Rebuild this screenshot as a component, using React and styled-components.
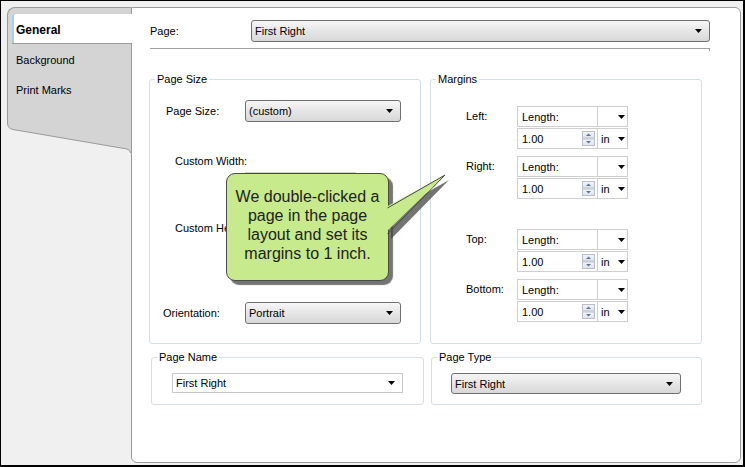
import React from 'react';
import styled, { createGlobalStyle } from 'styled-components';

const Global = createGlobalStyle`
  html, body { margin: 0; padding: 0; background: #fff; }
  body { font-family: "Liberation Sans", Arial, sans-serif; font-size: 11px; color: #000; }
  * { box-sizing: border-box; }
`;

const Window = styled.div`
  width: 745px;
  height: 467px;
  border-style: solid;
  border-color: #000;
  border-width: 1px 2px 2px 1px;
  background: #f0f0f0;
  padding: 6px 2px 2px 6px;
  display: flex;
  align-items: stretch;
`;

const Sidebar = styled.div`
  width: 124px;
  flex: none;
  display: flex;
  flex-direction: column;
`;

const TabsPanel = styled.div`
  height: 113px;
  background: #d4d4d4;
  border-top: 1px solid #9a9a9a;
  border-left: 1px solid #9a9a9a;
  border-top-left-radius: 8px;
  padding: 6px 0 0 4px;
  display: flex;
  flex-direction: column;
`;

const Tab = styled.div`
  height: 30px;
  display: flex;
  align-items: center;
  padding: 2px 0 0 4px;
  font-size: ${p => (p.$active ? '12px' : '11px')};
  font-weight: ${p => (p.$active ? 'bold' : 'normal')};
  background: ${p => (p.$active ? '#fff' : 'transparent')};
  border-bottom: 1px solid ${p => (p.$active ? '#9a9a9a' : 'transparent')};
  box-shadow: ${p => (p.$active ? 'inset 2px 0 0 #a9cdee' : 'none')};
  border-top-left-radius: ${p => (p.$active ? '2px' : '0')};
  margin-right: ${p => (p.$active ? '-1px' : '0')};
  position: relative;
  z-index: ${p => (p.$active ? 1 : 0)};
`;

const SlantEdge = styled.svg`
  display: block;
  width: 124px;
  height: 33px;
`;

const Panel = styled.div`
  flex: 1;
  position: relative;
  background: #fff;
  border: 1px solid #9a9a9a;
  border-radius: 0 6px 6px 6px;
  padding: 12px 0 0 17px;
`;

const TopRow = styled.div`
  display: flex;
  align-items: center;
  margin-left: 1px;
`;

const Label = styled.div`
  width: ${p => (p.$w ? `${p.$w}px` : 'auto')};
  flex: none;
  white-space: nowrap;
  line-height: ${p => (p.$lh ? `${p.$lh}px` : 'normal')};
`;

const Select = styled.div`
  width: ${p => p.$w}px;
  height: ${p => p.$h || 22}px;
  flex: none;
  display: flex;
  align-items: center;
  justify-content: space-between;
  padding: 0 7px 0 3px;
  border: 1px solid ${p => (p.$plain ? '#c9c9c9' : '#707070')};
  border-radius: ${p => (p.$plain ? '0' : '3px')};
  background: ${p => (p.$plain ? '#fff' : 'linear-gradient(#f6f6f6, #e6e6e6 50%, #d8d8d8)')};
  white-space: nowrap;
`;

const Separator = styled.div`
  width: 560px;
  height: 3px;
  margin: 6px 0 0 1px;
  border-top: 1px solid #a0a0a0;
  border-right: 1px solid #a0a0a0;
`;

const GroupRow = styled.div`
  display: grid;
  grid-template-columns: ${p => p.$cols};
  column-gap: ${p => p.$gap}px;
  margin: ${p => p.$mt}px 0 0 ${p => p.$ml}px;
`;

const Group = styled.fieldset`
  margin: 0;
  padding: 0;
  min-width: 0;
  height: ${p => p.$h}px;
  border: 1px solid #d5dfe5;
  border-radius: 3px;
`;

const Legend = styled.legend`
  margin-left: 5px;
  padding: 0 2px;
  font-size: 11px;
  line-height: 14px;
`;

const FormRow = styled.div`
  display: flex;
  align-items: ${p => (p.$top ? 'flex-start' : 'center')};
  height: ${p => (p.$h ? `${p.$h}px` : 'auto')};
  margin-top: ${p => p.$mt}px;
  padding-left: ${p => p.$pl}px;
`;

const FieldStack = styled.div`
  display: flex;
  flex-direction: column;
  gap: 1px;
`;

const FieldRow = styled.div`
  display: flex;
  width: ${p => p.$w || 111}px;
  height: 21px;
  border: 1px solid #cfcfcf;
  color: ${p => (p.$disabled ? '#8d8d8d' : '#000')};
  background: ${p => (p.$disabled ? '#f4f4f4' : '#fff')};
`;

const Cell = styled.div`
  width: ${p => p.$w}px;
  flex: none;
  display: flex;
  align-items: center;
  justify-content: space-between;
  padding: 0 ${p => p.$pr ?? 2}px 0 ${p => p.$pl ?? 4}px;
  border-left: ${p => (p.$divider ? '1px solid #cfcfcf' : 'none')};
  white-space: nowrap;
`;

const CalloutBox = styled.div`
  position: absolute;
  left: 94px;
  top: 165px;
  width: 163px;
  height: 108px;
  background: #c6ea8c;
  border: 1px solid #4a4a4a;
  border-radius: 9px;
  box-shadow: 4px 4px 1px rgba(70, 70, 70, 0.75);
  padding-top: 13px;
  text-align: center;
  font-family: "Liberation Sans", Arial, sans-serif;
  font-size: 16px;
  line-height: 19px;
  color: #222;
  white-space: nowrap;
  z-index: 2;
`;

const CalloutText = styled.div`
  position: relative;
  z-index: 1;
`;

const Tail = styled.svg`
  position: absolute;
  left: 149px;
  top: -6px;
  width: 80px;
  height: 85px;
  overflow: visible;
`;

const Arrow = () => (
  <svg width="7" height="4" viewBox="0 0 7 4" style={{ flex: 'none' }}>
    <polygon points="0,0 7,0 3.5,4" fill="#000" />
  </svg>
);

const Spinner = () => (
  <svg width="13" height="15" viewBox="0 0 13 15" style={{ flex: 'none' }}>
    <defs>
      <linearGradient id="sg" x1="0" y1="0" x2="0" y2="1">
        <stop offset="0" stopColor="#f3f5f9" />
        <stop offset="1" stopColor="#dfe3ea" />
      </linearGradient>
    </defs>
    <rect x="0.5" y="0.5" width="12" height="6.5" fill="url(#sg)" stroke="#b9bfca" />
    <rect x="0.5" y="8" width="12" height="6.5" fill="url(#sg)" stroke="#b9bfca" />
    <polygon points="4,5 9,5 6.5,2.5" fill="#5a73a8" />
    <polygon points="4,10 9,10 6.5,12.5" fill="#5a73a8" />
  </svg>
);

const SpinPair = () => (
  <FieldStack>
    <FieldRow>
      <Cell $w={79}>Length:</Cell>
      <Cell $w={30} $divider $pl={3}>
        <span />
        <Arrow />
      </Cell>
    </FieldRow>
    <FieldRow>
      <Cell $w={79}>
        1.00
        <Spinner />
      </Cell>
      <Cell $w={30} $divider $pl={3}>
        in
        <Arrow />
      </Cell>
    </FieldRow>
  </FieldStack>
);

const ValueField = () => (
  <FieldRow $disabled $w={111}>
    <Cell $w={79}>
      <span />
      <Spinner />
    </Cell>
    <Cell $w={30} $divider $pl={3}>
      <span />
      <Arrow />
    </Cell>
  </FieldRow>
);

const MarginRow = ({ label, mt }) => (
  <FormRow $mt={mt} $pl={35} $top>
    <Label $w={51} $lh={21}>{label}</Label>
    <SpinPair />
  </FormRow>
);

export default function App() {
  return (
    <>
      <Global />
      <Window>
        <Sidebar>
          <TabsPanel>
            <Tab $active>General</Tab>
            <Tab>Background</Tab>
            <Tab>Print Marks</Tab>
          </TabsPanel>
          <SlantEdge viewBox="0 0 124 33">
            <path d="M0 0 H124 V33 H123.5 Q123 29.5 120 29 L6 9.5 Q0.5 8.5 0.5 3 Z" fill="#d4d4d4" />
            <path d="M0.5 0 V3 Q0.5 8.5 6 9.5 L120 29 Q123 29.5 123.5 33" fill="none" stroke="#9a9a9a" />
          </SlantEdge>
        </Sidebar>
        <Panel>
          <TopRow>
            <Label $w={101}>Page:</Label>
            <Select $w={459}>
              First Right
              <Arrow />
            </Select>
          </TopRow>
          <Separator />
          <GroupRow $cols="272px 272px" $gap={9} $mt={21} $ml={0}>
            <Group $h={272}>
              <Legend>Page Size</Legend>
              <FormRow $mt={14} $pl={16}>
                <Label $w={79}>Page Size:</Label>
                <Select $w={156}>
                  (custom)
                  <Arrow />
                </Select>
              </FormRow>
              <FormRow $mt={32} $pl={25} $h={14}>
                <Label>Custom Width:</Label>
              </FormRow>
              <FormRow $mt={4} $pl={95}>
                <ValueField />
              </FormRow>
              <FormRow $mt={28} $pl={25} $h={14}>
                <Label>Custom Height:</Label>
              </FormRow>
              <FormRow $mt={4} $pl={95}>
                <ValueField />
              </FormRow>
              <FormRow $mt={42} $pl={13}>
                <Label $w={82}>Orientation:</Label>
                <Select $w={156}>
                  Portrait
                  <Arrow />
                </Select>
              </FormRow>
            </Group>
            <Group $h={272}>
              <Legend>Margins</Legend>
              <MarginRow label="Left:" mt={20} />
              <MarginRow label="Right:" mt={7} />
              <MarginRow label="Top:" mt={30} />
              <MarginRow label="Bottom:" mt={7} />
            </Group>
          </GroupRow>
          <GroupRow $cols="273px 271px" $gap={7} $mt={6} $ml={2}>
            <Group $h={55}>
              <Legend>Page Name</Legend>
              <FormRow $mt={9} $pl={20}>
                <Select $plain $w={231} $h={20}>
                  First Right
                  <Arrow />
                </Select>
              </FormRow>
            </Group>
            <Group $h={55}>
              <Legend>Page Type</Legend>
              <FormRow $mt={9} $pl={19}>
                <Select $w={230} $h={21}>
                  First Right
                  <Arrow />
                </Select>
              </FormRow>
            </Group>
          </GroupRow>
          <CalloutBox>
            <Tail viewBox="0 0 80 85">
              <polygon points="15,45 73,12 15,71" fill="rgba(70,70,70,0.75)" />
              <polygon points="8,40 69,7 8,66" fill="#c6ea8c" />
              <polyline points="11.5,40 69,7 11.5,66" fill="none" stroke="#4a4a4a" />
            </Tail>
            <CalloutText>
              We double-clicked a<br />
              page in the page<br />
              layout and set its<br />
              margins to 1 inch.
            </CalloutText>
          </CalloutBox>
        </Panel>
      </Window>
    </>
  );
}
